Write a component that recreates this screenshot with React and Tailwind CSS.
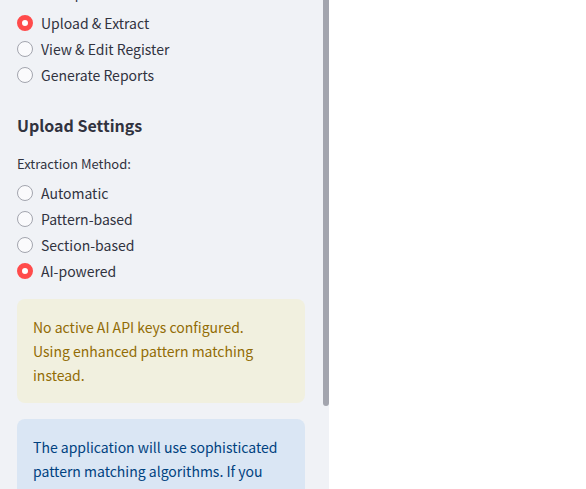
import { useState } from 'react';

function RadioGroup({ legend, name, options, initial }) {
  const [value, setValue] = useState(initial);
  return (
    <fieldset>
      <legend className="text-[13px] leading-[22px]">{legend}</legend>
      <div className="mt-1.5 flex flex-col gap-0.5">
        {options.map((option) => (
          <label key={option} className="flex h-6 items-center gap-2 leading-6">
            <input
              type="radio"
              name={name}
              checked={value === option}
              onChange={() => setValue(option)}
              className="size-4 shrink-0 appearance-none rounded-full border border-[#a3a5ae] bg-[#fafafc] checked:border-5 checked:border-[#ff4b4b] checked:bg-white"
            />
            <span>{option}</span>
          </label>
        ))}
      </div>
    </fieldset>
  );
}

export default function App() {
  return (
    <div className="flex h-screen overflow-hidden bg-white font-['Noto_Sans_CJK_SC',sans-serif] text-[14px] text-[#31333f]">
      <aside className="flex w-[329px] shrink-0 bg-[#f0f2f6]">
        <div className="-mt-[17px] flex min-w-0 flex-1 flex-col pr-[18px] pl-[17px]">
          <RadioGroup
            legend="Choose Option:"
            name="page"
            options={['Upload & Extract', 'View & Edit Register', 'Generate Reports']}
            initial="Upload & Extract"
          />
          <h3 className="mt-[26px] mb-4 text-[16px] leading-6 font-semibold">Upload Settings</h3>
          <RadioGroup
            legend="Extraction Method:"
            name="method"
            options={['Automatic', 'Pattern-based', 'Section-based', 'AI-powered']}
            initial="AI-powered"
          />
          <p className="mt-4 rounded-lg bg-[#f1f0df] p-4 leading-6 text-[#926c05]">
            No active AI API keys configured.
            <br />
            Using enhanced pattern matching instead.
          </p>
          <p className="mt-4 flex-1 rounded-t-lg bg-[#dae6f4] px-4 pt-4 leading-6 text-[#004280]">
            The application will use sophisticated pattern matching algorithms. If you
          </p>
        </div>
        <div className="w-1.5 shrink-0">
          <div className="h-[83%] rounded-b-full bg-[#a3a5ae]" />
        </div>
      </aside>
      <main className="flex-1" />
    </div>
  );
}
